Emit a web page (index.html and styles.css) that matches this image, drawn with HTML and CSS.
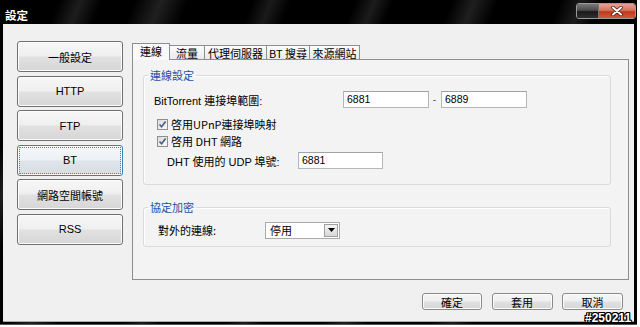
FILE: index.html
```html
<!DOCTYPE html>
<html lang="zh-Hant">
<head>
<meta charset="utf-8">
<title>設定</title>
<link rel="stylesheet" href="styles.css">
</head>
<body>
<div class="window">
  <div class="titlebar">
    <span class="title">設定</span>
    <div class="caption-btns">
      <span class="cap-btn cap-min"></span>
      <span class="cap-btn cap-close">
        <svg width="12" height="10" viewBox="0 0 12 10"><path d="M2 1.5 L10 8.5 M10 1.5 L2 8.5" stroke="#3a1a14" stroke-width="3.4" stroke-linecap="round"/><path d="M2 1.5 L10 8.5 M10 1.5 L2 8.5" stroke="#ffffff" stroke-width="2" stroke-linecap="round"/></svg>
      </span>
    </div>
  </div>
  <div class="client">
    <div class="content">
      <nav class="sidebar">
        <button class="side-btn">一般設定</button>
        <button class="side-btn">HTTP</button>
        <button class="side-btn">FTP</button>
        <button class="side-btn focused">BT</button>
        <button class="side-btn">網路空間帳號</button>
        <button class="side-btn">RSS</button>
      </nav>
      <div class="main">
        <div class="tabs">
          <span class="tab active w38">連線</span>
          <span class="tab w35">流量</span>
          <span class="tab w62">代理伺服器</span>
          <span class="tab w43">BT 搜尋</span>
          <span class="tab w50">來源網站</span>
        </div>
        <div class="panel">
          <fieldset class="group g1">
            <legend>連線設定</legend>
            <div class="row r-port">
              <span class="lbl lbl-port">BitTorrent 連接埠範圍:</span>
              <span class="input w86">6881</span>
              <span class="dash">-</span>
              <span class="input w86">6889</span>
            </div>
            <label class="chk chk1"><span class="box"><svg width="9" height="9" viewBox="0 0 9 9"><path d="M1.5 4.5 L3.6 6.8 L7.6 1.6" fill="none" stroke="#4a5f86" stroke-width="1.7"/></svg></span>啓用UPnP連接埠映射</label>
            <label class="chk chk2"><span class="box"><svg width="9" height="9" viewBox="0 0 9 9"><path d="M1.5 4.5 L3.6 6.8 L7.6 1.6" fill="none" stroke="#4a5f86" stroke-width="1.7"/></svg></span>啓用 DHT 網路</label>
            <div class="row r-dht">
              <span class="lbl lbl-dht">DHT 使用的 UDP 埠號:</span>
              <span class="input w85">6881</span>
            </div>
          </fieldset>
          <fieldset class="group g2">
            <legend>協定加密</legend>
            <div class="row r-enc">
              <span class="lbl lbl-enc">對外的連線:</span>
              <span class="select"><span class="sel-text">停用</span><span class="sel-btn"><svg width="7" height="4" viewBox="0 0 7 4"><path d="M0 0 H7 L3.5 4 Z" fill="#000"/></svg></span></span>
            </div>
          </fieldset>
        </div>
      </div>
    </div>
    <div class="footer">
      <button class="btn w60">確定</button>
      <button class="btn w61">套用</button>
      <button class="btn w61">取消</button>
    </div>
  </div>
</div>
<div class="watermark">#250211</div>
</body>
</html>
```

FILE: styles.css
```css
* { box-sizing: border-box; }
html, body { margin: 0; padding: 0; background: #ffffff; }
body {
  width: 640px;
  height: 327px;
  overflow: hidden;
  position: relative;
  font-family: "Liberation Sans", "Noto Sans CJK TC", sans-serif;
  font-size: 11px;
  color: #000;
}
.window {
  width: 637px;
  height: 325px;
  display: flex;
  flex-direction: column;
  background:
    linear-gradient(112deg,
      #000 0px, #000 55px, #1d1d1d 75px, #000 95px,
      #000 125px, #202020 150px, #000 175px,
      #000 235px, #1a1a1a 252px, #000 270px,
      #000 330px, #1c1c1c 348px, #000 365px,
      #000 420px, #1f1f1f 440px, #000 462px,
      #000 520px, #1b1b1b 540px, #000 560px, #000 637px);
  border-bottom: 1px solid #555;
}
.titlebar {
  height: 24px;
  display: flex;
  justify-content: space-between;
  align-items: flex-start;
  padding: 0 1px 0 5px;
}
.title {
  color: #fff;
  font-family: "Noto Sans CJK TC", sans-serif;
  font-weight: bold;
  font-size: 11.5px;
  line-height: 14px;
  margin-top: 8px;
  letter-spacing: 0;
}
.caption-btns {
  display: flex;
  margin-top: 3px;
  height: 16px;
  border: 1px solid #9a9a9a;
  border-radius: 3px;
  overflow: hidden;
}
.cap-btn { display: flex; align-items: center; justify-content: center; height: 100%; }
.cap-min {
  width: 22px;
  background: linear-gradient(#7a7a7a 0%, #4a4a4a 45%, #1a1a1a 55%, #303030 100%);
  border-right: 1px solid #777;
}
.cap-close {
  width: 36px;
  background: linear-gradient(#e6a394 0%, #d6735f 45%, #c0391c 55%, #d0583c 100%);
}
.client {
  flex: 1;
  margin: 0 3px 2px 3px;
  background: #f0f0f0;
  display: flex;
  flex-direction: column;
  border-bottom: 1px solid #aaa;
}
.content {
  display: flex;
  gap: 9px;
  padding: 17px 5px 0 14px;
}
.sidebar {
  width: 106px;
  display: flex;
  flex-direction: column;
  gap: 3.5px;
}
.side-btn, .btn {
  font-family: "Liberation Sans", "Noto Sans CJK TC", sans-serif;
  font-size: 11px;
  color: #000;
  border: 1px solid #707070;
  border-radius: 3px;
  background: linear-gradient(#f7f7f7 0%, #efefef 48%, #e1e1e1 52%, #d6d6d6 100%);
  box-shadow: inset 0 0 0 1px #fcfcfc;
  padding: 0;
  display: flex;
  align-items: center;
  justify-content: center;
}
.side-btn { height: 31px; width: 106px; }
.side-btn.focused {
  border-color: #3c7fb1;
  background: linear-gradient(#f4f7fa 0%, #edf1f5 48%, #dfe4e9 52%, #d6dde3 100%);
  outline: 1px dotted #5a7aa0;
  outline-offset: -3px;
}
.main { flex: 1; display: flex; flex-direction: column; }
.tabs {
  height: 18px;
  display: flex;
  align-items: flex-end;
  position: relative;
  z-index: 1;
}
.tab {
  height: 14px;
  border: 1px solid #8c8e94;
  border-bottom: none;
  border-left: none;
  background: linear-gradient(#fbfbfb, #eaeaea);
  font-family: "Noto Sans CJK TC", "Liberation Sans", sans-serif;
  font-size: 11px;
  line-height: 12px;
  display: flex;
  align-items: center;
  justify-content: center;
}
.tab:first-child { border-left: 1px solid #8c8e94; }
.tab.active {
  height: 17px;
  margin-bottom: -1px;
  background: #f9f9f9;
  padding-bottom: 2px;
}
.w38 { width: 38px; } .w35 { width: 35px; } .w62 { width: 62px; }
.w43 { width: 43px; } .w50 { width: 50px; }
.panel {
  height: 221px;
  border: 1px solid #8c8e94;
  background: #f3f3f3;
  padding: 8px 17px 0 10px;
}
.group {
  margin: 0;
  border: 1px solid #d6dbe0;
  border-radius: 3px;
  padding: 0 10px 15px 10px;
  display: flex;
  flex-direction: column;
  box-shadow: 1px 1px 0 #ffffff inset;
}
.group legend {
  color: #1b4fa8;
  font-family: "Noto Sans CJK TC", sans-serif;
  font-size: 11px;
  line-height: 14px;
  padding: 0 2px;
  margin-left: -6px;
}
.g2 { margin-top: 15px; padding-bottom: 8px; }
.row { display: flex; align-items: center; }
.lbl { font-family: "Liberation Sans", "Noto Sans CJK TC", sans-serif; font-size: 11px; }
.r-port { height: 17px; margin-top: 9px; }
.lbl-port { width: 189px; }
.input {
  height: 17px;
  border: 1px solid #b4b6ba;
  border-top-color: #9fa2a6;
  background: #fff;
  font-size: 10.5px;
  line-height: 15px;
  padding-left: 3px;
}
.w86 { width: 86px; } .w85 { width: 85px; }
.dash { width: 12px; text-align: center; color: #555; font-size: 10px; padding-right: 1px; }
.chk {
  display: flex;
  align-items: center;
  height: 16px;
  margin-left: 3px;
  font-family: "Noto Sans CJK TC", "Liberation Sans", sans-serif;
  font-size: 11px;
}
.chk1 { margin-top: 8px; }
.chk2 { margin-top: 1px; }
.box {
  width: 11px;
  height: 11px;
  border: 1px solid #8e8f8f;
  background: linear-gradient(135deg, #dcdcdc, #fafafa);
  margin-right: 3px;
  display: flex;
  align-items: center;
  justify-content: center;
}
.r-dht { height: 17px; margin-top: 3px; margin-left: 13px; }
.lbl-dht { width: 131px; }
.r-enc { height: 16px; margin-top: 8px; margin-left: 4px; }
.lbl-enc { width: 107px; font-family: "Noto Sans CJK TC", sans-serif; }
.select {
  width: 75px;
  height: 17px;
  border: 1px solid #a8aaae;
  background: #fff;
  display: flex;
  align-items: stretch;
}
.sel-text {
  flex: 1;
  padding-left: 4px;
  font-family: "Noto Sans CJK TC", sans-serif;
  font-size: 11px;
  line-height: 15px;
}
.sel-btn {
  width: 14px;
  margin: 1px;
  border: 1px solid #a0a0a0;
  background: linear-gradient(#f4f4f4, #d8d8d8);
  display: flex;
  align-items: center;
  justify-content: center;
}
.footer {
  display: flex;
  justify-content: flex-end;
  gap: 9.5px;
  margin-top: 13px;
  padding-right: 11px;
}
.btn {
  height: 17px;
  font-family: "Noto Sans CJK TC", sans-serif;
  font-size: 11px;
  border-color: #8a8a8a;
}
.w60 { width: 60px; } .w61 { width: 61px; }
.watermark {
  position: absolute;
  left: 585px;
  top: 312px;
  font-family: "Liberation Sans", sans-serif;
  font-weight: bold;
  font-size: 12px;
  line-height: 13px;
  color: #fff;
  text-shadow: 1px 0 0 #000, -1px 0 0 #000, 0 1px 0 #000, 0 -1px 0 #000, 1px 1px 0 #000, -1px -1px 0 #000, 1px -1px 0 #000, -1px 1px 0 #000;
}
```
